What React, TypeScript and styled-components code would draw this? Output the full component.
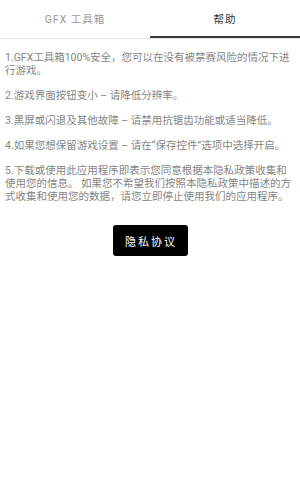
import React, { useState } from 'react'
import styled, { createGlobalStyle } from 'styled-components'

const GlobalStyle = createGlobalStyle`
  html, body {
    margin: 0;
    padding: 0;
    background: #fff;
  }
  body {
    font-family: Roboto, "Noto Sans CJK SC", sans-serif;
  }
`

const Page = styled.div`
  width: 300px;
  min-height: 495px;
  background: #fff;
  display: flex;
  flex-direction: column;
`

const TabBar = styled.div`
  display: flex;
  height: 38px;
  border-bottom: 1px solid #e6e6e6;
`

const Tab = styled.div<{ active: boolean }>`
  flex: 1;
  display: flex;
  align-items: center;
  justify-content: center;
  font-size: 10.5px;
  letter-spacing: 1px;
  color: ${p => (p.active ? '#333' : '#9a9a9a')};
  border-bottom: 2px solid ${p => (p.active ? '#3a3a3a' : 'transparent')};
  cursor: pointer;
`

const Content = styled.div`
  display: flex;
  flex-direction: column;
  gap: 12px;
  padding: 12px 5px 0;
`

const Para = styled.p`
  margin: 0;
  font-size: 10.5px;
  line-height: 13px;
  color: #858585;
`

const ButtonRow = styled.div`
  display: flex;
  justify-content: center;
  padding-top: 22px;
`

const PrivacyButton = styled.button`
  width: 75px;
  height: 31px;
  border: none;
  border-radius: 3px;
  background: #000;
  color: #fff;
  font-family: "Noto Sans CJK SC", sans-serif;
  font-size: 11px;
  letter-spacing: 2px;
  padding: 0 0 0 2px;
  cursor: pointer;
`

const tips = [
  '1.GFX工具箱100%安全，您可以在没有被禁赛风险的情况下进行游戏。',
  '2.游戏界面按钮变小 – 请降低分辨率。',
  '3.黑屏或闪退及其他故障 – 请禁用抗锯齿功能或适当降低。',
  '4.如果您想保留游戏设置 – 请在“保存控件”选项中选择开启。',
  '5.下载或使用此应用程序即表示您同意根据本隐私政策收集和使用您的信息。 如果您不希望我们按照本隐私政策中描述的方式收集和使用您的数据，请您立即停止使用我们的应用程序。',
]

export default function App() {
  const [tab, setTab] = useState(1)
  return (
    <>
      <GlobalStyle />
      <Page>
        <TabBar>
          <Tab active={tab === 0} onClick={() => setTab(0)}>GFX 工具箱</Tab>
          <Tab active={tab === 1} onClick={() => setTab(1)}>帮助</Tab>
        </TabBar>
        <Content>
          {tips.map((t, i) => (
            <Para key={i}>{t}</Para>
          ))}
        </Content>
        <ButtonRow>
          <PrivacyButton>隐私协议</PrivacyButton>
        </ButtonRow>
      </Page>
    </>
  )
}
